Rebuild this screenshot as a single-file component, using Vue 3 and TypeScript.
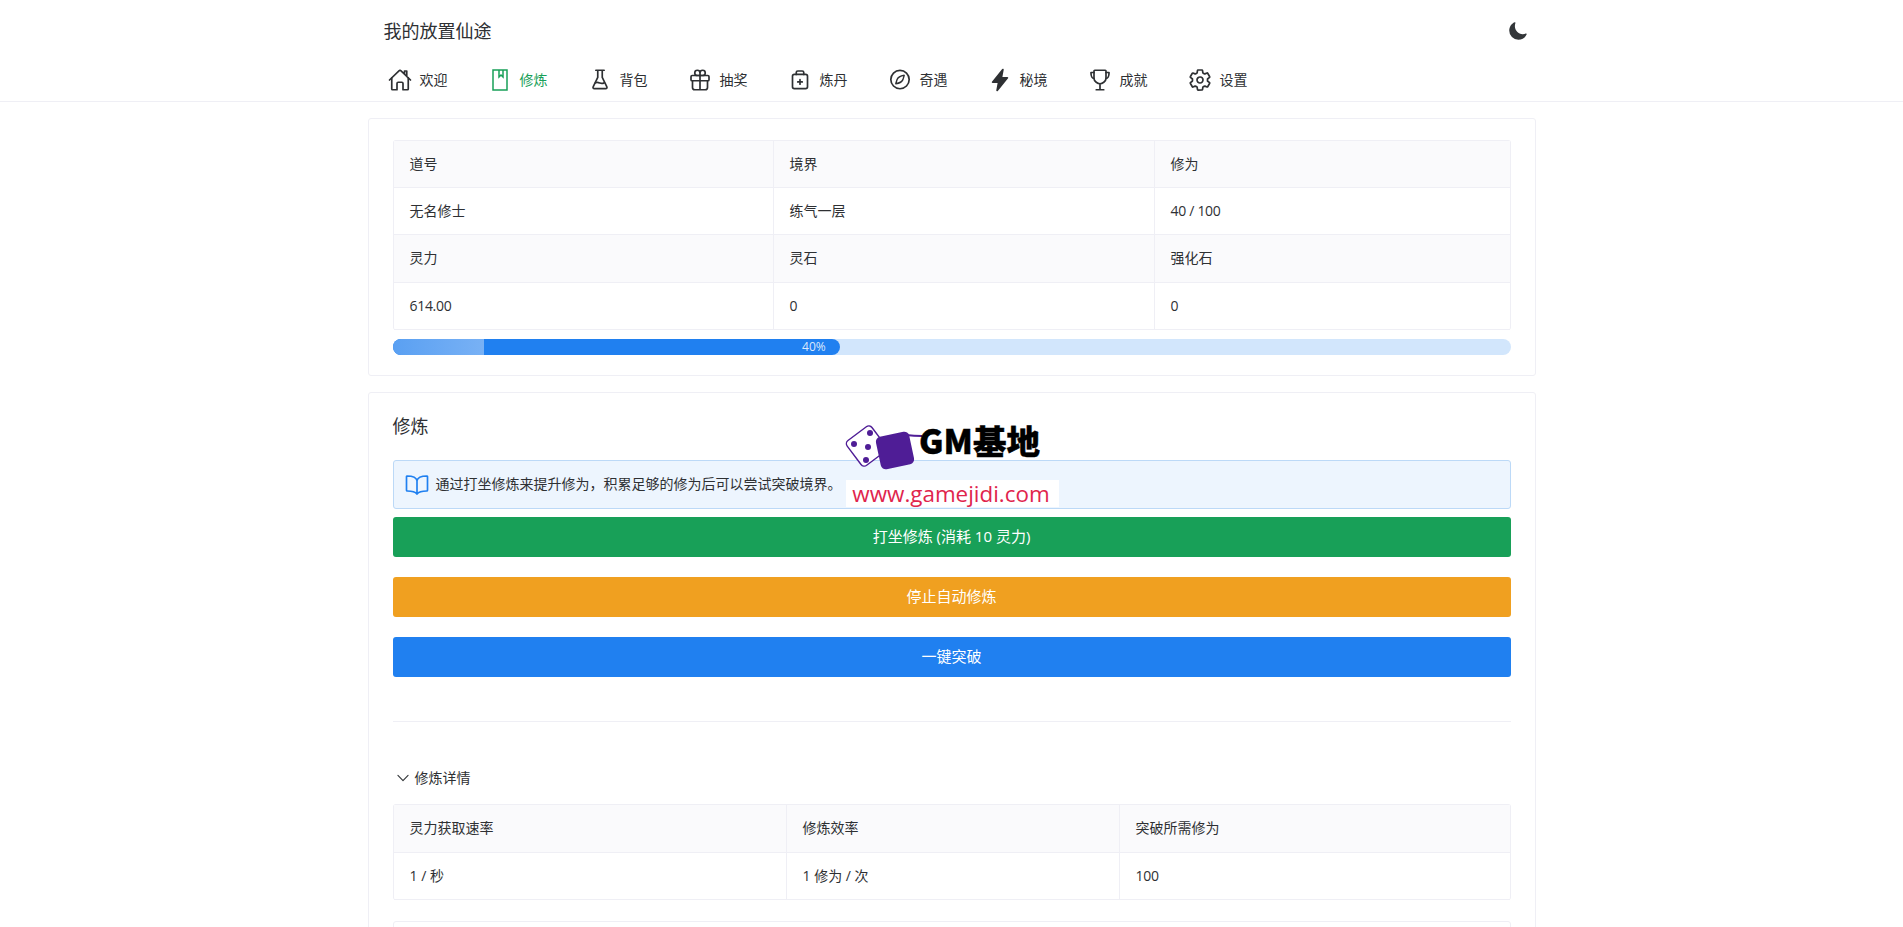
<script setup lang="ts">
interface NavItem { label: string; icon: string; active?: boolean }
const nav: NavItem[] = [
  { label: '欢迎', icon: 'home' },
  { label: '修炼', icon: 'note', active: true },
  { label: '背包', icon: 'flask' },
  { label: '抽奖', icon: 'gift' },
  { label: '炼丹', icon: 'medkit' },
  { label: '奇遇', icon: 'compass' },
  { label: '秘境', icon: 'flash' },
  { label: '成就', icon: 'trophy' },
  { label: '设置', icon: 'settings' },
]
const actions = [
  { label: '打坐修炼 (消耗 10 灵力)', kind: 'green' },
  { label: '停止自动修炼', kind: 'orange' },
  { label: '一键突破', kind: 'blue' },
]
const gear = 'M262.29 192.31a64 64 0 1057.4 57.4 64.13 64.13 0 00-57.4-57.4zM416.39 256a154.34 154.34 0 01-1.53 20.79l45.21 35.46a10.81 10.81 0 012.45 13.75l-42.77 74a10.81 10.81 0 01-13.14 4.59l-44.9-18.08a16.11 16.11 0 00-15.17 1.75A164.48 164.48 0 01325 400.8a15.94 15.94 0 00-8.82 12.14l-6.73 47.89a11.08 11.08 0 01-10.68 9.17h-85.54a11.11 11.11 0 01-10.69-8.87l-6.72-47.82a16.07 16.07 0 00-9-12.22 155.3 155.3 0 01-21.46-12.57 16 16 0 00-15.11-1.71l-44.89 18.07a10.81 10.81 0 01-13.14-4.58l-42.77-74a10.8 10.8 0 012.45-13.75l38.21-30a16.05 16.05 0 006-14.08c-.36-4.17-.58-8.33-.58-12.5s.21-8.27.58-12.35a16 16 0 00-6.07-13.94l-38.19-30A10.81 10.81 0 0149.48 186l42.77-74a10.81 10.81 0 0113.14-4.59l44.9 18.08a16.11 16.11 0 0015.17-1.75A164.48 164.48 0 01187 111.2a15.94 15.94 0 008.82-12.14l6.73-47.89A11.08 11.08 0 01213.23 42h85.54a11.11 11.11 0 0110.69 8.87l6.72 47.82a16.07 16.07 0 009 12.22 155.3 155.3 0 0121.46 12.57 16 16 0 0015.11 1.71l44.89-18.07a10.81 10.81 0 0113.14 4.58l42.77 74a10.8 10.8 0 01-2.45 13.75l-38.21 30a16.05 16.05 0 00-6.07 14.08c.33 4.14.55 8.3.55 12.47z'
</script>

<template>
  <div class="page">
    <header class="header">
      <div class="wrap">
        <div class="top">
          <span class="brand">我的放置仙途</span>
          <svg class="moon" viewBox="0 0 512 512"><path d="M264 480A232 232 0 0132 248c0-94 54-178.28 137.61-214.67a16 16 0 0121.06 21.06C181.07 76.43 176 104.66 176 136c0 110.28 89.72 200 200 200 31.34 0 59.57-5.07 81.61-14.67a16 16 0 0121.06 21.06C442.28 426 358 480 264 480z" /></svg>
        </div>
        <nav class="nav">
          <a v-for="item in nav" :key="item.label" class="nav-item" :class="{ active: item.active }">
            <svg class="ic" :viewBox="item.icon === 'note' ? '0 0 24 24' : '0 0 512 512'">
              <template v-if="item.icon === 'home'">
                <path d="M80 212v236a16 16 0 0016 16h96V328a24 24 0 0124-24h80a24 24 0 0124 24v136h96a16 16 0 0016-16V212" />
                <path d="M480 256L266.89 52c-5-5.28-16.69-5.34-21.78 0L32 256M400 179V64h-48v69" />
              </template>
              <template v-else-if="item.icon === 'note'">
                <path class="thin" d="M5 2h14v20H5zM11 2v7l2-2 2 2V2" />
              </template>
              <template v-else-if="item.icon === 'flask'">
                <path d="M168 48h176M208 48v152L112 396c-14 28 0 44 24 44h240c24 0 38-16 24-44L304 200V48" />
                <path d="M160 316c36-24 64-8 96 6s60 10 92-8" />
              </template>
              <template v-else-if="item.icon === 'gift'">
                <path d="M256 104v56h56a56 56 0 10-56-56zM256 104v56h-56a56 56 0 1156-56z" />
                <rect x="64" y="160" width="384" height="112" rx="24" />
                <path d="M416 272v144a48 48 0 01-48 48H144a48 48 0 01-48-48V272M256 160v304" />
              </template>
              <template v-else-if="item.icon === 'medkit'">
                <rect x="96" y="136" width="320" height="304" rx="40" />
                <path d="M176 136V96a32 32 0 0132-32h96a32 32 0 0132 32v40M256 248v96M208 296h96" />
              </template>
              <template v-else-if="item.icon === 'compass'">
                <circle cx="256" cy="246" r="196" />
                <path class="mid" d="M346 156c-72 12-132 36-152 88-10 30-20 60-28 92 72-12 132-36 152-88 10-30 20-60 28-92z" />
              </template>
              <template v-else-if="item.icon === 'flash'">
                <path class="solid" d="M194.82 496a18.36 18.36 0 01-18.1-21.53v-.11L204.83 320H96a16 16 0 01-12.44-26.06L302.73 22a18.45 18.45 0 0132.8 13.71c0 .3-.08.59-.12.89L307.19 192H416a16 16 0 0112.44 26.06L209.24 490a18.45 18.45 0 01-14.42 6z" />
              </template>
              <template v-else-if="item.icon === 'trophy'">
                <path d="M176 464h160M256 464V336M384 224c0-50.64-.08-134.63-.12-160a16 16 0 00-16-16l-223.79.26a16 16 0 00-16 15.95c0 30.58-.13 129.17-.13 159.79 0 64.28 83 112 128 112S384 288.28 384 224z" />
                <path d="M128 96H64v16c0 55.22 24 112 64 112M384 96h64v16c0 55.22-24 112-64 112" />
              </template>
              <template v-else>
                <path :d="gear" />
              </template>
            </svg>
            <span>{{ item.label }}</span>
          </a>
        </nav>
      </div>
    </header>

    <main class="main">
      <section class="card stats">
        <table class="table t3">
          <colgroup><col class="c1" /><col class="c2" /><col /></colgroup>
          <thead>
            <tr><th>道号</th><th>境界</th><th>修为</th></tr>
          </thead>
          <tbody>
            <tr><td>无名修士</td><td>练气一层</td><td class="num">40 / 100</td></tr>
            <tr class="shade"><td>灵力</td><td>灵石</td><td>强化石</td></tr>
            <tr><td class="num">614.00</td><td>0</td><td>0</td></tr>
          </tbody>
        </table>
        <div class="rail">
          <div class="fill">
            <span class="shine"></span>
            <span class="pct">40%</span>
          </div>
        </div>
      </section>

      <section class="card">
        <h2 class="title">修炼</h2>
        <div class="alert">
          <svg class="ic alert-ic" viewBox="0 0 512 512"><path d="M256 160c16-63.16 76.43-95.41 208-96a15.94 15.94 0 0116 16v288a16 16 0 01-16 16c-128 0-177.45 25.81-208 64-30.37-38-80-64-208-64-9.88 0-16-8.05-16-17.93V80a15.94 15.94 0 0116-16c131.57.59 192 32.84 208 96zM256 160v288" /></svg>
          <span>通过打坐修炼来提升修为，积累足够的修为后可以尝试突破境界。</span>
        </div>
        <div class="actions">
          <button v-for="a in actions" :key="a.label" class="btn" :class="a.kind">{{ a.label }}</button>
        </div>
        <div class="divider"></div>
        <div class="collapse">
          <svg class="chev" viewBox="0 0 512 512"><path d="M112 184l144 144 144-144" /></svg>
          <span>修炼详情</span>
        </div>
        <table class="table t2">
          <colgroup><col class="d1" /><col class="d2" /><col /></colgroup>
          <thead>
            <tr><th>灵力获取速率</th><th>修炼效率</th><th>突破所需修为</th></tr>
          </thead>
          <tbody>
            <tr><td>1 / 秒</td><td>1 修为 / 次</td><td class="num">100</td></tr>
          </tbody>
        </table>
        <div class="next"></div>
      </section>
    </main>

    <div class="mark">
      <svg class="dice" viewBox="0 0 80 60">
        <path class="line" d="M62 17q8 1 16 1" />
        <rect class="die-w" x="7" y="12.5" width="31" height="31" rx="4" transform="rotate(-37 22.5 28)" />
        <circle cx="26" cy="15" r="3" /><circle cx="10" cy="26" r="3" /><circle cx="24" cy="29" r="3" /><circle cx="22" cy="42" r="3" />
        <rect x="34" y="16" width="34" height="33" rx="5" transform="rotate(-12 51 32.5)" />
      </svg>
      <div class="gm">GM基地</div>
      <div class="url">www.gamejidi.com</div>
    </div>
  </div>
</template>

<style>
html, body { margin: 0; background: #fff; overflow: hidden; }
</style>

<style scoped>
.page {
  position: relative;
  font-family: "Open Sans", "Noto Sans CJK SC", sans-serif;
  font-size: 14px;
  line-height: 1.6;
  color: #2e3033;
  background: #fff;
}
.header { border-bottom: 1px solid #efeff5; }
.wrap { width: 1168px; margin: 0 auto; }
.top {
  height: 59px;
  padding: 16px 8px 0 16px;
  box-sizing: border-box;
  display: flex;
  justify-content: space-between;
  align-items: flex-start;
}
.brand { font-size: 18px; line-height: 30px; }
.moon { width: 20px; height: 20px; margin-top: 5px; fill: #333639; }
.nav { display: flex; height: 42px; }
.nav-item {
  width: 100px;
  box-sizing: border-box;
  padding-left: 20px;
  display: flex;
  align-items: center;
  gap: 8px;
  flex: none;
  white-space: nowrap;
}
.nav-item.active { color: #18a058; }
.ic {
  width: 24px;
  height: 24px;
  flex: none;
  fill: none;
  stroke: currentColor;
  stroke-width: 36;
  stroke-linecap: round;
  stroke-linejoin: round;
}
.ic .thin { stroke-width: 1.5; stroke-linecap: butt; stroke-linejoin: miter; }
.ic .mid { stroke-width: 30; }
.ic .solid { fill: currentColor; stroke: none; }

.main {
  width: 1168px;
  margin: 0 auto;
  padding-top: 16px;
  display: flex;
  flex-direction: column;
  gap: 16px;
}
.card {
  border: 1px solid #efeff5;
  border-radius: 3px;
  padding: 20px 24px;
}
.stats { padding-top: 20.6px; }
.table {
  width: 100%;
  border-collapse: separate;
  border-spacing: 0;
  table-layout: fixed;
  border: 1px solid #efeff5;
  border-bottom: 0;
  border-radius: 3px;
}
.table th, .table td {
  padding: 12px 16px;
  text-align: left;
  font-weight: 400;
  border-bottom: 1px solid #efeff5;
  border-right: 1px solid #efeff5;
}
.table th { background: #fafafc; }
.table th:last-child, .table td:last-child { border-right: 0; }
.table .shade td { background: #fafafc; }
.table .num { letter-spacing: -0.3px; }
.c1 { width: 380px; }
.c2 { width: 381px; }
.d1 { width: 393px; }
.d2 { width: 333px; }

.rail {
  height: 16px;
  margin-top: 9px;
  border-radius: 8px;
  background: #d2e6fc;
}
.fill {
  position: relative;
  width: 40%;
  height: 100%;
  border-radius: 8px;
  background: #2080f0;
  overflow: hidden;
  display: flex;
  justify-content: flex-end;
  align-items: center;
  padding-right: 14px;
  box-sizing: border-box;
}
.shine {
  position: absolute;
  left: 0;
  top: 0;
  bottom: 0;
  width: 91px;
  background: linear-gradient(90deg, #5aa0f2, #78b1f5);
}
.pct { position: relative; color: rgba(255, 255, 255, 0.85); font-size: 12px; line-height: 16px; }

.title { margin: 0 0 21px; font-size: 18px; font-weight: 400; line-height: 26px; }
.alert {
  height: 49px;
  box-sizing: border-box;
  display: flex;
  align-items: center;
  gap: 7px;
  padding: 0 11px;
  background: #edf5fe;
  border: 1px solid #bcd9f7;
  border-radius: 3px;
}
.alert-ic { color: #2080f0; }
.actions {
  margin-top: 8px;
  display: flex;
  flex-direction: column;
  gap: 20px;
}
.btn {
  height: 40px;
  border: 0;
  border-radius: 3px;
  color: #fff;
  font: inherit;
  font-size: 15px;
  padding: 0 0 2px;
}
.green { background: #18a058; }
.orange { background: #f0a020; }
.blue { background: #2080f0; }
.divider { height: 1px; background: #efeff5; margin-top: 44px; }
.collapse {
  margin-top: 45px;
  display: flex;
  align-items: center;
  gap: 3px;
  line-height: 22px;
}
.chev {
  width: 18px;
  height: 18px;
  margin-left: 1px;
  fill: none;
  stroke: #333639;
  stroke-width: 32;
  stroke-linecap: round;
  stroke-linejoin: round;
}
.t2 { margin-top: 15px; }
.next {
  height: 60px;
  margin-top: 21px;
  border: 1px solid #efeff5;
  border-radius: 3px;
}

.mark {
  position: absolute;
  left: 840px;
  top: 418px;
  width: 220px;
  height: 90px;
}
.dice { position: absolute; left: 4px; top: 0; width: 80px; height: 60px; fill: #4f1d96; }
.line { stroke: #4f1d96; stroke-width: 2; fill: none; }
.die-w { fill: #fff; stroke: #4f1d96; stroke-width: 1.4; }
.gm {
  position: absolute;
  left: 79px;
  top: 0;
  font-family: "Noto Sans CJK SC", sans-serif;
  font-size: 33.5px;
  font-weight: 900;
  line-height: 44px;
  color: #000;
  -webkit-text-stroke: 0.4px #000;
  white-space: nowrap;
}
.url {
  position: absolute;
  left: 6px;
  top: 62px;
  width: 213px;
  height: 27px;
  box-sizing: border-box;
  padding-right: 3px;
  background: #fff;
  color: #e0244c;
  font-size: 22.4px;
  line-height: 27px;
  text-align: center;
  white-space: nowrap;
}
</style>
